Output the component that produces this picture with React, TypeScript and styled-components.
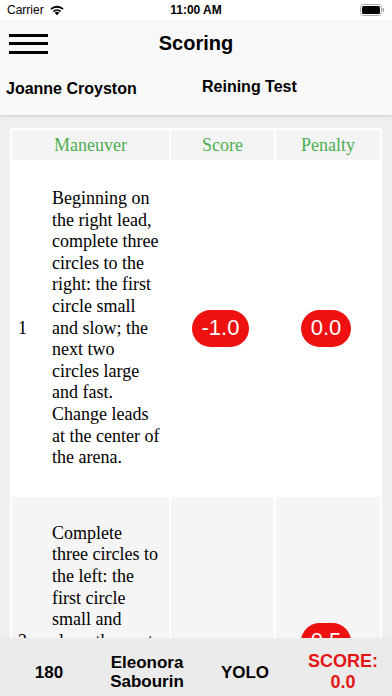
import React from "react";
import styled, { createGlobalStyle } from "styled-components";

const GlobalStyle = createGlobalStyle`
  html, body { margin: 0; padding: 0; background: #efefef; }
  * { box-sizing: border-box; }
`;

const Screen = styled.div`
  width: 392px;
  height: 696px;
  display: flex;
  flex-direction: column;
  overflow: hidden;
  background: #efefef;
  font-family: "Liberation Sans", Arial, sans-serif;
  color: #000;
`;

const StatusBar = styled.div`
  height: 20px;
  background: #ffffff;
  display: grid;
  grid-template-columns: 1fr auto 1fr;
  align-items: center;
  padding: 0 7px;
  font-size: 12px;
`;

const StatusLeft = styled.div`
  display: flex;
  align-items: center;
  gap: 5px;
`;

const StatusTime = styled.div`
  font-weight: 600;
  font-size: 12px;
`;

const StatusRight = styled.div`
  display: flex;
  justify-content: flex-end;
  align-items: center;
`;

const NavBar = styled.div`
  background: #f8f8f8;
  height: 96px;
  border-bottom: 1px solid #d9d9d9;
  box-shadow: 0 1px 2px rgba(0, 0, 0, 0.08);
  display: flex;
  flex-direction: column;
`;

const TopRow = styled.div`
  height: 46px;
  display: grid;
  grid-template-columns: 1fr auto 1fr;
  align-items: center;
`;

const Hamburger = styled.div`
  display: flex;
  flex-direction: column;
  gap: 5.5px;
  padding-left: 9px;
  padding-top: 1px;
`;

const Bar = styled.span`
  display: block;
  width: 39px;
  height: 3px;
  background: #000;
`;

const Title = styled.div`
  font-size: 20px;
  font-weight: 700;
`;

const InfoRow = styled.div`
  display: grid;
  grid-template-columns: 196px 1fr;
  padding-left: 6px;
`;

const InfoText = styled.div<{ $top: number }>`
  margin-top: ${(p) => p.$top}px;
  font-size: 16px;
  font-weight: 700;
  line-height: 19px;
`;

const Content = styled.div`
  flex: 1;
  overflow: hidden;
  padding: 12px 10px 0;
`;

const Table = styled.div`
  display: grid;
  grid-template-columns: 157px 103px 104px;
  gap: 2px;
  padding: 2px;
  background: #ffffff;
  font-family: "Liberation Serif", "Times New Roman", serif;
`;

const HeadCell = styled.div`
  height: 30px;
  background: #f4f4f4;
  color: #4caf50;
  font-size: 18px;
  display: flex;
  align-items: center;
  justify-content: center;
`;

const ManeuverCell = styled.div<{ $shade: boolean }>`
  background: ${(p) => (p.$shade ? "#f5f5f5" : "#ffffff")};
  display: flex;
  align-items: center;
  padding: 26px 6px;
  font-size: 18px;
  line-height: 1.2;
`;

const Num = styled.div`
  width: 34px;
  flex-shrink: 0;
`;

const Desc = styled.div`
  width: 109px;
`;

const ValueCell = styled.div<{ $shade: boolean }>`
  background: ${(p) => (p.$shade ? "#f5f5f5" : "#ffffff")};
  display: flex;
  align-items: center;
  justify-content: center;
  padding-right: 4px;
`;

const Badge = styled.span`
  background: #ef1010;
  color: #fff;
  font-family: "Liberation Sans", Arial, sans-serif;
  font-size: 22px;
  line-height: 26px;
  padding: 5.5px 10px;
  border-radius: 20px;
`;

const Footer = styled.div`
  height: 58px;
  flex-shrink: 0;
  background: #ebebeb;
  display: grid;
  grid-template-columns: repeat(4, 1fr);
  align-items: center;
  padding-top: 10px;
  text-align: center;
`;

const FootItem = styled.div<{ $red?: boolean }>`
  font-weight: 700;
  font-size: ${(p) => (p.$red ? 18 : 17)}px;
  line-height: ${(p) => (p.$red ? 21 : 19)}px;
  color: ${(p) => (p.$red ? "#e31515" : "#000")};
`;

const Wifi = () => (
  <svg width="16" height="12" viewBox="0 0 15 11">
    <path d="M7.5 10.5 L5.3 8.1 A3.2 3.2 0 0 1 9.7 8.1 Z" fill="#000" />
    <path d="M3.6 6.4 A5.6 5.6 0 0 1 11.4 6.4 L10.3 7.5 A4.1 4.1 0 0 0 4.7 7.5 Z" fill="#000" />
    <path d="M1.3 4.1 A8.9 8.9 0 0 1 13.7 4.1 L12.5 5.3 A7.2 7.2 0 0 0 2.5 5.3 Z" fill="#000" />
  </svg>
);

const Battery = () => (
  <svg width="25" height="12" viewBox="0 0 25 12">
    <rect x="0.5" y="0.5" width="21" height="11" rx="3" fill="none" stroke="#a8a8a8" />
    <rect x="2" y="2" width="18" height="8" rx="1.5" fill="#000" />
    <rect x="22.5" y="4" width="1.6" height="4" rx="0.8" fill="#a8a8a8" />
  </svg>
);

type Row = {
  n: number;
  text: string;
  score?: string;
  penalty?: string;
};

const rows: Row[] = [
  {
    n: 1,
    text:
      "Beginning on the right lead, complete three circles to the right: the first circle small and slow; the next two circles large and fast. Change leads at the center of the arena.",
    score: "-1.0",
    penalty: "0.0",
  },
  {
    n: 2,
    text:
      "Complete three circles to the left: the first circle small and slow; the next two circles large and fast. Change leads at the center of the arena.",
    penalty: "0.5",
  },
  {
    n: 3,
    text:
      "Continue around previous circle to the right. At the end of the arena, run a large loop.",
    score: "0.0",
    penalty: "0.0",
  },
];

export default function App() {
  return (
    <>
      <GlobalStyle />
      <Screen>
        <StatusBar>
          <StatusLeft>
            <span>Carrier</span>
            <Wifi />
          </StatusLeft>
          <StatusTime>11:00 AM</StatusTime>
          <StatusRight>
            <Battery />
          </StatusRight>
        </StatusBar>
        <NavBar>
          <TopRow>
            <Hamburger>
              <Bar />
              <Bar />
              <Bar />
            </Hamburger>
            <Title>Scoring</Title>
            <div />
          </TopRow>
          <InfoRow>
            <InfoText $top={13}>Joanne Croyston</InfoText>
            <InfoText $top={11}>Reining Test</InfoText>
          </InfoRow>
        </NavBar>
        <Content>
          <Table>
            <HeadCell>Maneuver</HeadCell>
            <HeadCell>Score</HeadCell>
            <HeadCell>Penalty</HeadCell>
            {rows.map((r, i) => {
              const shade = i % 2 === 1;
              return (
                <React.Fragment key={r.n}>
                  <ManeuverCell $shade={shade}>
                    <Num>{r.n}</Num>
                    <Desc>{r.text}</Desc>
                  </ManeuverCell>
                  <ValueCell $shade={shade}>
                    {r.score && <Badge>{r.score}</Badge>}
                  </ValueCell>
                  <ValueCell $shade={shade}>
                    {r.penalty && <Badge>{r.penalty}</Badge>}
                  </ValueCell>
                </React.Fragment>
              );
            })}
          </Table>
        </Content>
        <Footer>
          <FootItem>180</FootItem>
          <FootItem>
            Eleonora
            <br />
            Sabourin
          </FootItem>
          <FootItem>YOLO</FootItem>
          <FootItem $red>
            SCORE:
            <br />
            0.0
          </FootItem>
        </Footer>
      </Screen>
    </>
  );
}
